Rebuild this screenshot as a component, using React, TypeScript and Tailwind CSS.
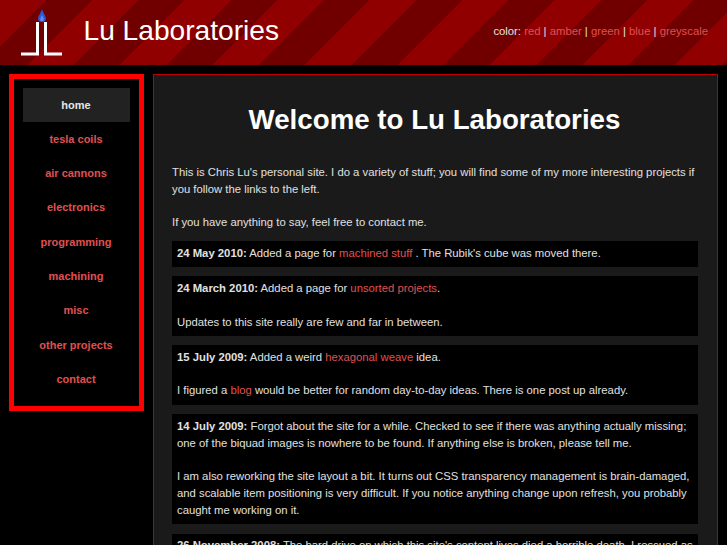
const font = "font-['Liberation_Sans',Arial,sans-serif]";

function A({ children }: { children: React.ReactNode }) {
  return <a className="text-[#e05050]">{children}</a>;
}

const nav = ["tesla coils", "air cannons", "electronics", "programming", "machining", "misc", "other projects", "contact"];

function Logo() {
  return (
    <svg width="41" height="47" viewBox="0 0 41 47" className="ml-[21px] mt-[9px] shrink-0">
      <path d="M21 0 C22 4 25 7 25 10 C24.500 12.500 22.500 13 21 13 C19.500 13 17.500 12.500 17 10 C17 7 20 4 21 0Z" fill="#2f55d8" />
      <path d="M21 6 C22 8 23 10 22.800 11 C22.400 12.300 19.600 12.300 19.200 11 C19 10 20 8 21 6Z" fill="#5f8cf5" />
      <path d="M16.500 13 V45 H0 M24.500 13 V45 H41" stroke="#ffffff" strokeWidth="3" fill="none" />
    </svg>
  );
}

function Entry({ children }: { children: React.ReactNode }) {
  return <div className="bg-black px-[5px] pb-[5.500px] pt-[3.500px] text-[#e0e0e0]">{children}</div>;
}

export default function App() {
  return (
    <div className={`${font} h-[545px] overflow-hidden bg-black text-[11.300px] leading-[16.800px]`}>
      <header className="flex h-[65px] items-start justify-between bg-[repeating-linear-gradient(135deg,#900000_0,#900000_32.700px,#700000_32.700px,#700000_65.400px)]">
        <div className="flex items-start">
          <Logo />
          <h2 className="ml-[21.500px] mt-[14px] text-[28.150px] leading-[34px] text-white">Lu Laboratories</h2>
        </div>
        <div className="mr-[19px] mt-[23px] text-[#e0e0e0]">
          color: <A>red</A> | <A>amber</A> | <A>green</A> | <A>blue</A> | <A>greyscale</A>
        </div>
      </header>
      <div className="ml-[9px] mr-[9px] mt-[9px] flex items-start gap-[9px]">
        <nav className="flex h-[337px] w-[135px] shrink-0 flex-col items-stretch border-[5px] border-[#ff0000] bg-black p-[9px] text-[11px] font-bold">
          <a className="flex h-[34px] items-center justify-center bg-[#222222] pr-[1px] text-[#e6e6e6]">home</a>
          {nav.map((n) => (
            <a key={n} className="flex h-[34.300px] items-center justify-center pr-[1px] text-[#e05050]">{n}</a>
          ))}
        </nav>
        <main className="min-w-0 flex-1 border border-[#c00000] bg-[#1a1a1a] px-[18px] pb-[20px] pt-[28px]">
          <h1 className="mb-[27px] pr-[2px] text-center text-[27.700px] font-bold leading-[34px] text-white">Welcome to Lu Laboratories</h1>
          <p className="text-[#e0e0e0]">
            This is Chris Lu's personal site. I do a variety of stuff; you will find some of my more interesting projects if you follow the links to the left.
          </p>
          <p className="mb-[10px] mt-[16.800px] text-[#e0e0e0]">If you have anything to say, feel free to contact me.</p>
          <div className="flex w-[526px] flex-col gap-[9.500px]">
            <Entry><b>24 May 2010:</b> Added a page for <A>machined stuff</A> . The Rubik's cube was moved there.</Entry>
            <Entry>
              <b>24 March 2010:</b> Added a page for <A>unsorted projects</A>.<br /><br />
              Updates to this site really are few and far in between.
            </Entry>
            <Entry>
              <b>15 July 2009:</b> Added a weird <A>hexagonal weave</A> idea.<br /><br />
              I figured a <A>blog</A> would be better for random day-to-day ideas. There is one post up already.
            </Entry>
            <Entry>
              <b>14 July 2009:</b> Forgot about the site for a while. Checked to see if there was anything actually missing; one of the biquad images is nowhere to be found. If anything else is broken, please tell me.<br /><br />
              I am also reworking the site layout a bit. It turns out CSS transparency management is brain-damaged, and scalable item positioning is very difficult. If you notice anything change upon refresh, you probably caught me working on it.
            </Entry>
            <Entry>
              <b>26 November 2008:</b> The hard drive on which this site's content lives died a horrible death. I rescued as much as I could from the old disk.
            </Entry>
          </div>
        </main>
      </div>
    </div>
  );
}
